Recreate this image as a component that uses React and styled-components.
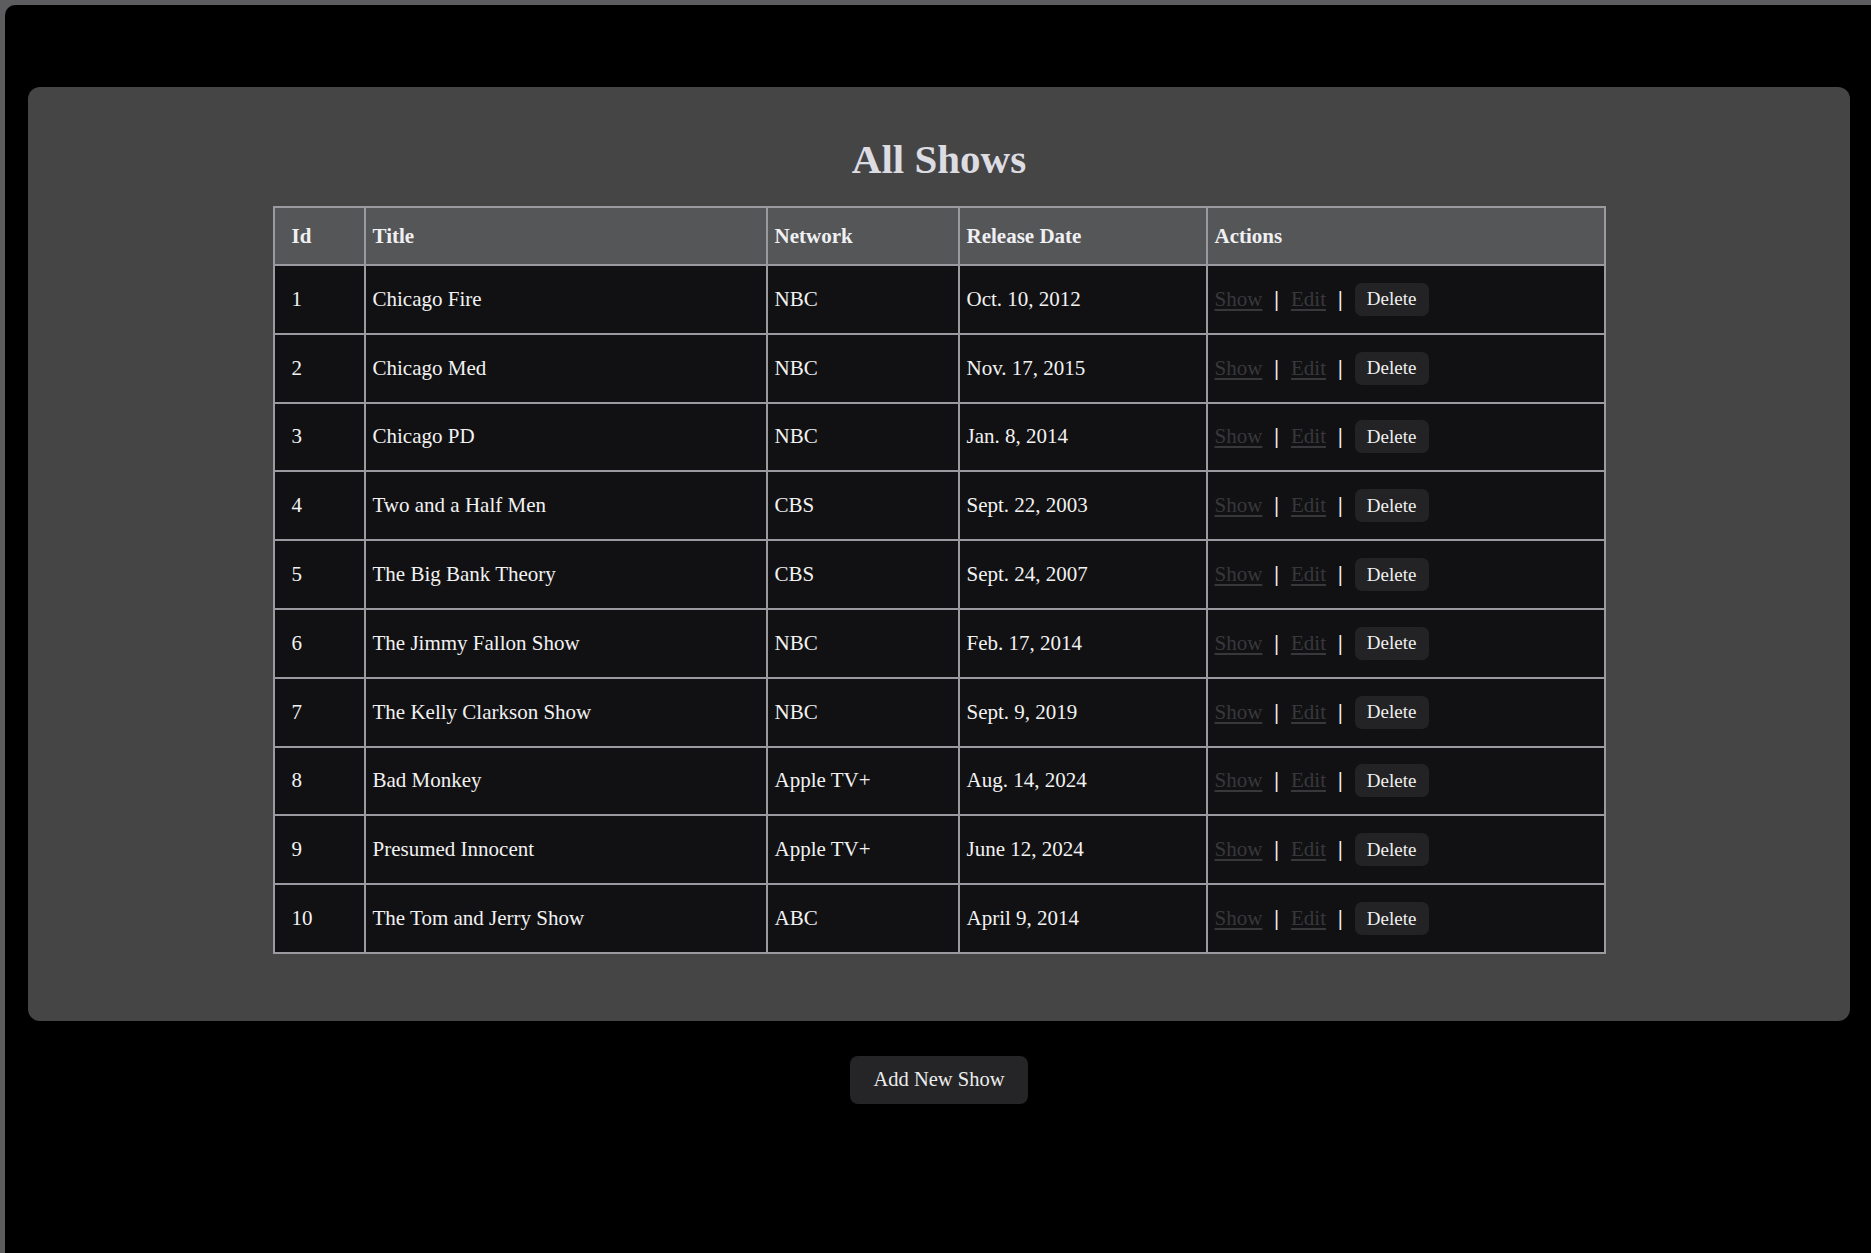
import React from "react";
import styled, { createGlobalStyle } from "styled-components";

const GlobalStyle = createGlobalStyle`
  html, body {
    margin: 0;
    padding: 0;
    background: #5d5d60;
  }
  body {
    font-family: "Liberation Serif", "Times New Roman", serif;
  }
  * { box-sizing: border-box; }
`;

const Screen = styled.div`
  margin: 5px 0 0 5px;
  min-height: calc(100vh - 5px);
  background: #000;
  border-top-left-radius: 10px;
  padding: 82px 21px 40px 23px;
  display: flex;
  flex-direction: column;
`;

const Panel = styled.section`
  background: #454545;
  border-radius: 12px;
  padding: 50px 0 67px;
  display: flex;
  flex-direction: column;
  align-items: center;
`;

const Title = styled.h1`
  margin: 0 0 25px;
  font-size: 41px;
  line-height: 44px;
  font-weight: 700;
  color: #dcdce2;
`;

const Table = styled.table`
  width: 1333px;
  border-collapse: collapse;
  table-layout: fixed;
  border: 2px solid #9a9aa0;
  font-size: 21px;
  color: #f2f2f2;
`;

const Column = styled.col`
  width: ${(p) => (p.$w ? `${p.$w}px` : "auto")};
`;

const HeadCell = styled.th`
  height: 58px;
  background: #555658;
  border: 2px solid #9a9aa0;
  text-align: left;
  font-weight: 700;
  color: #f0f0f2;
  padding: 0 8px 0 ${(p) => (p.$first ? "17px" : "7px")};
`;

const Cell = styled.td`
  height: 68.8px;
  background: #111113;
  border: 2px solid #9a9aa0;
  padding: 0 8px 0 ${(p) => (p.$first ? "17px" : "7px")};
  vertical-align: middle;
`;

const Actions = styled.div`
  display: flex;
  align-items: center;
  gap: 12px;
`;

const ActionLink = styled.a`
  color: #38383b;
  text-decoration: underline;
  text-underline-offset: 3px;
  cursor: pointer;
`;

const Divider = styled.span`
  color: #f4f4f4;
  font-size: 21px;
  font-weight: 700;
`;

const DeleteButton = styled.button`
  font-family: "Liberation Serif", "Times New Roman", serif;
  font-size: 19px;
  color: #f0f0f0;
  background: #232325;
  border: none;
  border-radius: 7px;
  height: 33px;
  width: 74px;
  padding: 0;
  cursor: pointer;
`;

const Footer = styled.div`
  display: flex;
  justify-content: center;
  padding-top: 35px;
`;

const AddButton = styled.button`
  font-family: "Liberation Serif", "Times New Roman", serif;
  font-size: 20.5px;
  color: #ececec;
  background: #252527;
  border: none;
  border-radius: 8px;
  width: 178px;
  height: 48px;
  padding: 0;
  cursor: pointer;
`;

const shows = [
  [1, "Chicago Fire", "NBC", "Oct. 10, 2012"],
  [2, "Chicago Med", "NBC", "Nov. 17, 2015"],
  [3, "Chicago PD", "NBC", "Jan. 8, 2014"],
  [4, "Two and a Half Men", "CBS", "Sept. 22, 2003"],
  [5, "The Big Bank Theory", "CBS", "Sept. 24, 2007"],
  [6, "The Jimmy Fallon Show", "NBC", "Feb. 17, 2014"],
  [7, "The Kelly Clarkson Show", "NBC", "Sept. 9, 2019"],
  [8, "Bad Monkey", "Apple TV+", "Aug. 14, 2024"],
  [9, "Presumed Innocent", "Apple TV+", "June 12, 2024"],
  [10, "The Tom and Jerry Show", "ABC", "April 9, 2014"],
];

export default function App() {
  return (
    <>
      <GlobalStyle />
      <Screen>
        <Panel>
          <Title>All Shows</Title>
          <Table>
            <colgroup>
              <Column $w={91} />
              <Column $w={402} />
              <Column $w={192} />
              <Column $w={248} />
              <Column />
            </colgroup>
            <thead>
              <tr>
                <HeadCell $first>Id</HeadCell>
                <HeadCell>Title</HeadCell>
                <HeadCell>Network</HeadCell>
                <HeadCell>Release Date</HeadCell>
                <HeadCell>Actions</HeadCell>
              </tr>
            </thead>
            <tbody>
              {shows.map(([id, title, network, date]) => (
                <tr key={id}>
                  <Cell $first>{id}</Cell>
                  <Cell>{title}</Cell>
                  <Cell>{network}</Cell>
                  <Cell>{date}</Cell>
                  <Cell>
                    <Actions>
                      <ActionLink>Show</ActionLink>
                      <Divider>|</Divider>
                      <ActionLink>Edit</ActionLink>
                      <Divider>|</Divider>
                      <DeleteButton>Delete</DeleteButton>
                    </Actions>
                  </Cell>
                </tr>
              ))}
            </tbody>
          </Table>
        </Panel>
        <Footer>
          <AddButton>Add New Show</AddButton>
        </Footer>
      </Screen>
    </>
  );
}
